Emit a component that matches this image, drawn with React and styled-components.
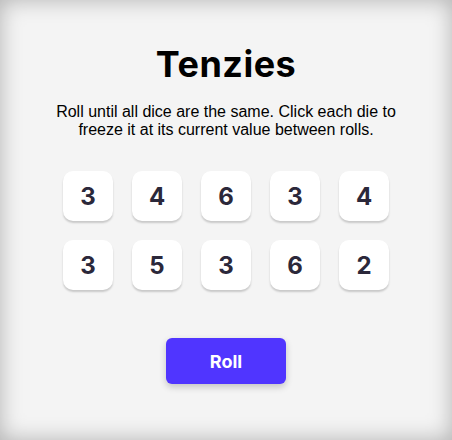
import React from "react";
import styled, { createGlobalStyle } from "styled-components";

const Global = createGlobalStyle`
  html, body { margin: 0; padding: 0; background: #f4f4f4; }
  * { box-sizing: border-box; }
`;

const Main = styled.main`
  width: 452px;
  height: 440px;
  background: #f4f4f4;
  box-shadow: inset 0 0 22px rgba(0, 0, 0, 0.28);
  display: flex;
  flex-direction: column;
  align-items: center;
  padding-top: 42px;
`;

const Title = styled.h1`
  margin: 0;
  font-family: Inter, sans-serif;
  font-weight: 700;
  font-size: 36px;
  line-height: 44px;
  color: #000;
  letter-spacing: 0.5px;
`;

const Instructions = styled.p`
  margin: 17px 0 0;
  max-width: 360px;
  text-align: center;
  font-family: "Liberation Sans", Arial, sans-serif;
  font-size: 16px;
  line-height: 18px;
  color: #000;
`;

const DiceGrid = styled.div`
  margin-top: 32px;
  display: grid;
  grid-template-columns: repeat(5, 50px);
  gap: 19px;
`;

const Die = styled.button`
  width: 50px;
  height: 50px;
  border: none;
  border-radius: 10px;
  background: ${(p) => (p.$held ? "#59E391" : "#ffffff")};
  box-shadow: 0 2px 2px rgba(0, 0, 0, 0.18);
  font-family: Inter, sans-serif;
  font-weight: 700;
  font-size: 24px;
  color: #2b283a;
  display: flex;
  align-items: center;
  justify-content: center;
  padding: 0;
  cursor: pointer;
`;

const RollButton = styled.button`
  margin-top: 48px;
  width: 120px;
  height: 46px;
  border: none;
  border-radius: 6px;
  background: #5035ff;
  color: #fff;
  font-family: Inter, sans-serif;
  font-weight: 700;
  font-size: 18px;
  box-shadow: 0 3px 7px rgba(0, 0, 0, 0.2);
  cursor: pointer;
`;

const dice = [3, 4, 6, 3, 4, 3, 5, 3, 6, 2];

export default function App() {
  return (
    <>
      <Global />
      <Main>
        <Title>Tenzies</Title>
        <Instructions>
          Roll until all dice are the same. Click each die to freeze it at its
          current value between rolls.
        </Instructions>
        <DiceGrid>
          {dice.map((v, i) => (
            <Die key={i}>{v}</Die>
          ))}
        </DiceGrid>
        <RollButton>Roll</RollButton>
      </Main>
    </>
  );
}
